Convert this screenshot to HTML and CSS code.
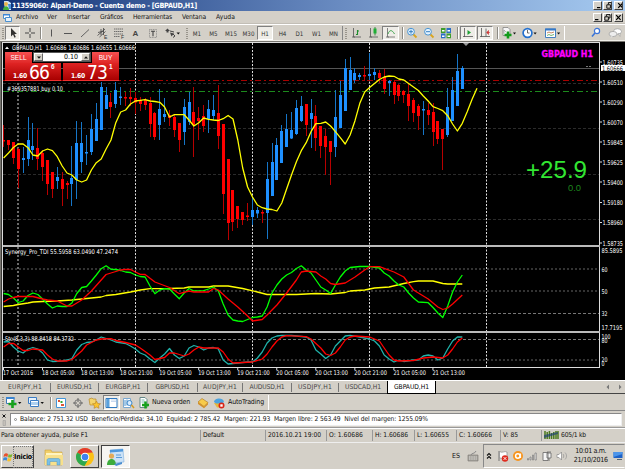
FILE: index.html
```html
<!DOCTYPE html>
<html lang="es">
<head>
<meta charset="utf-8">
<title>11359060: Alpari-Demo - Cuenta demo - [GBPAUD,H1]</title>
<link rel="stylesheet" href="styles.css">
</head>
<body>
<svg class="defs" width="0" height="0">
  <symbol id="win-min" viewBox="0 0 9 9"><path d="M2 6.6h3.4" stroke="#000" stroke-width="1.2"/></symbol>
  <symbol id="win-restore" viewBox="0 0 9 9"><path d="M3.4 3.4V1.6h3.6v3.4H5.6M1.8 3.8h3.6v3.4H1.8z" fill="none" stroke="#000" stroke-width=".9"/></symbol>
  <symbol id="win-close" viewBox="0 0 9 9"><path d="M2.2 2.2l4.4 4.6M6.6 2.2L2.2 6.8" stroke="#000" stroke-width="1.2"/></symbol>
  <symbol id="chev" viewBox="0 0 4 3"><path d="M0 .5h4L2 2.7z" fill="#111"/></symbol>
  <symbol id="cross" viewBox="0 0 12 12"><path d="M6 1v4M6 7v4M1 6h4M7 6h4" stroke="#444" stroke-width="1"/></symbol>
</svg>
<div class="app">
  <header class="titlebar">
    <svg width="12" height="11"><path d="M3 1h4l3 2v7H4z" fill="#cfe2f5"/><circle cx="5" cy="4" r="2" fill="#e9b44a"/><path d="M2 10c0-5 6-5 6 0z" fill="#3fae3b"/><path d="M7 4h3v5H8z" fill="#4b8fd8"/></svg>
    <h1 data-w="185">11359060: Alpari-Demo - Cuenta demo - [GBPAUD,H1]</h1>
    <div class="winbtns"><i><svg><use href="#win-min"/></svg></i><i><svg><use href="#win-restore"/></svg></i><i class="gap"><svg><use href="#win-close"/></svg></i></div>
  </header>
  <nav class="menubar">
    <svg width="12" height="11"><path d="M3.5 2.500h6v4h-6z" fill="#fff" stroke="#4a90d0"/><path d="M3 2h7v1.500H3z" fill="#3b86d6"/><path d="M5.500 5.500h6v4h-6z" fill="#e4f1fc" stroke="#4a90d0"/></svg>
    <span data-w="22">Archivo</span><span data-w="10">Ver</span><span data-w="23">Insertar</span><span data-w="23">Gráficos</span><span data-w="39">Herramientas</span><span data-w="24">Ventana</span><span data-w="19">Ayuda</span>
    <div class="winbtns"><i><svg><use href="#win-min"/></svg></i><i><svg><use href="#win-restore"/></svg></i><i class="gap"><svg><use href="#win-close"/></svg></i></div>
  </nav>
  <div class="toolbar">
    <b class="grip"></b>
    <b class="on"><svg width="12" height="12"><path d="M4 1v8.500l2-2 1.500 3.200 1.300-.6L7.400 7h2.500z" fill="#333"/></svg></b>
    <b><svg width="12" height="12"><use href="#cross"/></svg></b>
    <b class="sep"></b>
    <b><svg width="12" height="12"><path d="M6.500 2.500v7" stroke="#555"/></svg></b>
    <b><svg width="12" height="12"><path d="M2 6.500h8" stroke="#555"/></svg></b>
    <b><svg width="12" height="12"><path d="M2 10l8-7.500" stroke="#555" stroke-width=".9"/></svg></b>
    <b><svg width="12" height="12"><path d="M1.500 8.500L9 2M2 5.500l6-1.500M3.500 10l6-5.500M5 2v6M7.500 1v7" stroke="#444" stroke-width=".8"/><text x="8" y="11.500" class="ic">E</text></svg></b>
    <b><svg width="12" height="12"><path d="M1 2h9M1 4.500h9M1 7h9M1 9.500h6" stroke="#555" stroke-width=".8" stroke-dasharray="1.500 .5"/><text x="8" y="11.500" class="ic">F</text></svg></b>
    <b class="ltr">A</b>
    <b><svg width="12" height="12"><path d="M2.500 2.500h7v8h-7z" fill="none" stroke="#777" stroke-width=".7" stroke-dasharray="1 .7"/><path d="M4 4.300h4M6 4.300v5" stroke="#444" stroke-width="1.100"/></svg></b>
    <b><svg width="18" height="12"><path d="M3.500 1.500l2.500 2.500H4.500v1.500h-2V4H1zM6 5.500l4 1-2.500 3z" fill="#444"/><path d="M6 4l4 1M9 7l2 2-2 1.500" fill="none" stroke="#444"/><path d="M12.500 5.500h3.500l-1.700 2z" fill="#111"/></svg></b>
    <b class="grip"></b>
    <b class="tf">M1</b><b class="tf">M5</b><b class="tf">M15</b><b class="tf">M30</b><b class="tf on">H1</b><b class="tf">H4</b><b class="tf">D1</b><b class="tf">W1</b><b class="tf">MN</b>
    <b class="edge grip"></b>
    <b><svg width="12" height="12"><path d="M2.500 1v9H10M1 10h3" fill="none" stroke="#555" stroke-width=".8"/><path d="M5 7.500h1.500V3M6.500 4H8" fill="none" stroke="#1d8c2c" stroke-width="1.100"/></svg></b>
    <b><svg width="12" height="12"><path d="M2.500 1v9H10M1 10h3" fill="none" stroke="#555" stroke-width=".8"/><path d="M7 0v8.500" stroke="#1d7a2c" stroke-width=".8"/><path d="M5.500 1.500h3v5h-3z" fill="#1fae35"/></svg></b>
    <b class="on"><svg width="12" height="12"><path d="M2.500 1v9H10M1 10h3" fill="none" stroke="#666" stroke-width=".8"/><path d="M3 7c1.500-4.500 4-4.500 6.500 0" fill="none" stroke="#2c9c40" stroke-width=".9"/></svg></b>
    <b class="sep"></b>
    <b><svg width="12" height="12"><path d="M7 7l3.500 3.500" stroke="#d9a520" stroke-width="1.800"/><circle cx="5" cy="4.700" r="3.400" fill="#e3f3ff" stroke="#4a94d2"/><path d="M3 4.700h4M5 2.700v4" stroke="#2574bd" stroke-width=".9"/></svg></b>
    <b><svg width="12" height="12"><path d="M7 7l3.500 3.500" stroke="#d9a520" stroke-width="1.800"/><circle cx="5" cy="4.700" r="3.400" fill="#e3f3ff" stroke="#4a94d2"/><path d="M3 4.700h4" stroke="#2574bd" stroke-width=".9"/></svg></b>
    <b><svg width="12" height="12"><path d="M1 1h4.500v5H1zM6.500 6.500H11v4.800H6.500z" fill="#3f9d2c"/><path d="M6.500 1H11v5H6.500zM1 6.500h4.500v4.800H1z" fill="#2b6fc6"/><path d="M2 3h2.500v1.500H2zM7.500 3H10v1.500H7.500zM2 8.500h2.500V10H2zM7.500 8.500H10V10H7.500z" fill="#fff"/></svg></b>
    <b class="sep"></b>
    <b class="on"><svg width="12" height="12"><path d="M2.500 1v9M1 9.500h10" fill="none" stroke="#555" stroke-width=".8"/><path d="M5.500 3v5L9 5.500z" fill="#1fa035"/></svg></b>
    <b class="on"><svg width="12" height="12"><path d="M2.500 1v9M1 9.500h10M7 1.500v8" fill="none" stroke="#555" stroke-width=".8"/><path d="M11 5.500H8M9.500 3.500L7.700 5.500l1.800 2z" fill="#c33" stroke="#c33" stroke-width=".6"/></svg></b>
    <b class="sep"></b>
    <b><svg width="18" height="12"><path d="M3 .5h5l2 2v6H3z" fill="#f7f7f7" stroke="#777" stroke-width=".7"/><path d="M4 6.500V3l2 2" fill="none" stroke="#888" stroke-width=".6"/><path d="M8 4.500v7M4.500 8h7" stroke="#129a1b" stroke-width="2.600"/><path d="M13 5.500h3l-1.500 2z" fill="#111"/></svg></b>
    <b><svg width="18" height="12"><circle cx="6.500" cy="6" r="4.400" fill="#fff" stroke="#2571cf" stroke-width="1.700"/><path d="M6.500 3v3h2" fill="none" stroke="#444" stroke-width=".8"/><path d="M12.500 5.500h3.200l-1.600 2z" fill="#111"/></svg></b>
    <b><svg width="18" height="12"><path d="M1.500 2h10v8.500h-10z" fill="#fff" stroke="#4480c0"/><path d="M1 1.500h11v2H1z" fill="#3579c8"/><path d="M3 6l2-1 2 1 3-1" fill="none" stroke="#b66a3c" stroke-width=".8"/><path d="M3 8.500l2-1 2 1 3-1" fill="none" stroke="#4a9c4a" stroke-width=".8"/><path d="M13 5.500h3.200l-1.600 2z" fill="#111"/></svg></b>
    <b class="rule"></b>
    <b><svg width="12" height="12"><circle cx="7" cy="4" r="2.600" fill="#fff" stroke="#3b74d8" stroke-width="1.200"/><path d="M5 6L2 9.500" stroke="#3b74d8" stroke-width="1.600"/></svg></b>
    <b><svg width="15" height="12"><ellipse cx="9.500" cy="4.500" rx="4" ry="2.800" fill="#fff" stroke="#999" stroke-width=".7"/><path d="M10 6.500l2 3v-3z" fill="#eee" stroke="#999" stroke-width=".5"/><ellipse cx="5" cy="7" rx="4" ry="2.600" fill="#eee" stroke="#999" stroke-width=".7"/><path d="M3 9l-.5 2.300L5 9.500z" fill="#ddd"/></svg></b>
  </div>

  <main class="chart">
    <svg id="chart" width="625" height="339" viewBox="0 41 625 339"></svg>
    <section class="trade">
      <div class="top">
        <span class="sell">SELL</span>
        <span class="spin"><i><svg width="4" height="3"><use href="#chev"/></svg></i><em>0.10</em><i><svg class="flip" width="4" height="3"><use href="#chev"/></svg></i></span>
        <span class="sell buy">BUY</span>
      </div>
      <div class="prices">
        <div class="price"><small>1.60</small><strong>66</strong><sup>6</sup></div>
        <div class="price"><small>1.60</small><strong>73</strong><sup>1</sup></div>
      </div>
    </section>
  </main>

  <div class="tabs">
    <span><u data-w="34">EURJPY,H1</u></span><span><u data-w="35">EURUSD,H1</u></span><span><u data-w="35">EURGBP,H1</u></span><span><u data-w="34">GBPUSD,H1</u></span><span><u data-w="34">AUDJPY,H1</u></span><span><u data-w="35">AUDUSD,H1</u></span><span><u data-w="34">USDJPY,H1</u></span><span><u data-w="36">USDCAD,H1</u></span><span class="active"><u data-w="35">GBPAUD,H1</u></span>
    <svg width="20" height="8"><path d="M4 1.500v5L1.500 4zM14 1.500v5L16.500 4z" fill="#777"/></svg>
  </div>
  <div class="toolbar2">
    <b class="grip"></b>
    <b class="lead"><svg width="18" height="13"><path d="M1.500 1.500h7.500v6H1.500z" fill="#fff" stroke="#3c78b8"/><path d="M1 1h8.500v2H1z" fill="#3b84d0"/><path d="M7.500 4v8M3.500 8h8" stroke="#17a01c" stroke-width="2.600"/><path d="M13 6h3.400l-1.700 2z" fill="#111"/></svg></b>
    <b class="lead"><svg width="18" height="13"><path d="M1.500 1.500h8v6h-8z" fill="#e6f1fb" stroke="#3b7cc4"/><path d="M3.500 4.500h8v6h-8z" fill="#fff" stroke="#3b7cc4"/><path d="M4 6h7v3H4z" fill="#aed0ef"/><path d="M13.500 6h3.400l-1.700 2z" fill="#111"/></svg></b>
    <b class="sep"></b>
    <b><svg width="12" height="12"><path d="M1.500 1.500h9v9h-9z" fill="#fff" stroke="#4596d8"/><path d="M3 3h2v2H3zM6 7h3v2H6z" fill="#d53"/><path d="M5.500 4h2v2h-2z" fill="#3a3"/></svg></b>
    <b><svg width="12" height="12"><circle cx="6" cy="6" r="3.300" fill="none" stroke="#777"/><path d="M6 1v4M6 7v4M1 6h4M7 6h4" stroke="#666"/></svg></b>
    <b><svg width="13" height="12"><path d="M1 2l3-1 1 1h3v6H2z" fill="#f4d46c" stroke="#b98b2a" stroke-width=".7"/><path d="M8.500 4l1.200 2.500 2.800.3-2 1.900.5 2.600-2.500-1.200-2.500 1.200.5-2.600-2-1.900 2.800-.3z" fill="#fbc42d" stroke="#b98220" stroke-width=".6"/></svg></b>
    <b class="on"><svg width="13" height="12"><path d="M1 1.500h11v9H1z" fill="#fff" stroke="#2f78c0"/><path d="M1.500 2h3v8h-3z" fill="#5aa1dc"/><path d="M6 3h5M6 4.500h5" stroke="#c8d8ee"/></svg></b>
    <b><svg width="13" height="12"><path d="M1.500 1.500h7v9h-7z" fill="#fff" stroke="#7aa8d0"/><path d="M3 3v6M5 2.500v6" stroke="#4b92cc"/><circle cx="7.500" cy="6" r="2.500" fill="#d9edff" stroke="#3d87c8"/><path d="M9.500 8l2.500 3" stroke="#d49b25" stroke-width="1.500"/></svg></b>
    <b><svg width="12" height="12"><path d="M2 .5h5l2 2v8H2z" fill="#fff" stroke="#688"/><path d="M3.500 3h3M3.500 5h4" stroke="#5a9" stroke-width=".8"/><path d="M7.500 4.500v7M4 8h7" stroke="#17a01c" stroke-width="2.500"/></svg></b>
    <b class="txt"><u data-w="38">Nueva orden</u></b>
    <b><svg width="12" height="12"><path d="M1 5l4-3.500 6 4-4 4z" fill="#f8cb4b" stroke="#a9741c" stroke-width=".6"/><path d="M1 5v2l6 4.300v-1.800zM7 9.500l4-4v2l-4 3.800z" fill="#d3902a"/></svg></b>
    <b><svg width="12" height="12"><path d="M1 6h10l-2 4.500H4z" fill="#e9b83b"/><path d="M1 5c0-4 9-5 10 0l-2 1.500H3z" fill="#4da3df"/><circle cx="8.500" cy="8.500" r="3" fill="#d92518"/><path d="M7.300 7.300h2.400v2.400H7.300z" fill="#fff"/></svg></b>
    <b class="txt"><u data-w="36">AutoTrading</u></b>
    <b class="rule"></b>
  </div>
  <div class="terminal">
    <svg width="10" height="14"><path d="M2.500 1.500l3 3M5.500 1.500l-3 3" stroke="#111"/><path d="M3 7.500h2.500v5H3z" fill="#c4c0b8" stroke="#999" stroke-width=".5"/></svg>
    <p><i class="dot"></i><span data-w="408">Balance: 2 751.32 USD&nbsp; Beneficio/Pérdida: 34.10&nbsp; Equidad: 2 785.42&nbsp; Margen: 221.93&nbsp; Margen libre: 2 563.49&nbsp; Nivel del margen: 1255.09%</span></p>
  </div>
  <footer class="status">
    <span><u data-w="87">Para obtener ayuda, pulse F1</u></span><span><u data-w="21">Default</u></span><span><u data-w="53">2016.10.21 19:00</u></span><span><u data-w="34">O: 1.60686</u></span><span><u data-w="33">H: 1.60686</u></span><span><u data-w="32">L: 1.60655</u></span><span><u data-w="33">C: 1.60666</u></span><span><u data-w="15">V: 85</u></span>
    <span><svg width="15" height="9"><path d="M1 0v8M3.200 1v7M5.400 0v8M7.600 2v6M9.800 1v7M12 0v8M14 0v8" stroke="#4b7a1c" stroke-width="1.500"/><path d="M0 4l14-3v2L0 7z" fill="#1b3f77" opacity=".65"/></svg><u data-w="25">605/1 kb</u></span>
  </footer>
  <div class="taskbar">
    <button class="start"><svg width="10" height="11"><path d="M1 3.500C2.500 2 3.500 2 5 3l-.6 3C3 5 2 5.200.5 6z" fill="#e8502a"/><path d="M5.500 3.200c1.500.8 2.500.6 4-.4L8.700 6c-1.200.7-2.500.8-3.700.2z" fill="#7db72f"/><path d="M.4 6.700c1.400-.8 2.600-.7 3.900 0l-.6 3c-1.300-.8-2.500-.8-3.700 0z" fill="#3a87d8"/><path d="M4.800 7c1.300.6 2.500.5 3.800-.2l-.8 3c-1.200.7-2.400.8-3.600.2z" fill="#f8c12c"/></svg><u data-w="18">Inicio</u></button>
    <span class="task flat"><svg width="22" height="20"><path d="M2 3h6l1 2h10v13H2z" fill="#f1cf6a" stroke="#c9a13c" stroke-width=".6"/><path d="M3 6h16v3H3z" fill="#fff4c0"/><path d="M2 8h18v10H2z" fill="#f8e08b"/><path d="M4 18v-5c0-1 1-1.500 2-1.500h9c1 0 2 .5 2 1.500v5h-3v-3.500H7V18z" fill="#7cc0e6" stroke="#4c95c4" stroke-width=".5"/></svg></span>
    <span class="task raised"><svg width="20" height="20"><circle cx="10" cy="10" r="9" fill="#fbc116"/><path d="M10 10L2.200 5.500A9 9 0 0 1 17.800 5.500L10 6z" fill="#e33b2e"/><path d="M2.200 5.500A9 9 0 0 0 9.500 19l4-7L10 10z" fill="#2da94f"/><circle cx="10" cy="10" r="4.300" fill="#fff"/><circle cx="10" cy="10" r="3.300" fill="#3f83f0"/></svg></span>
    <span class="task pressed"><svg width="20" height="18"><path d="M4 2l13-1 1 13-12 1z" fill="#cbe2f7" stroke="#7fb0dd" stroke-width=".6"/><path d="M4 2l13-1v2.500L4 4.500z" fill="#4d97dc"/><path d="M10 7h5M10 9.500h6" stroke="#5a9ad8"/><circle cx="5.500" cy="8" r="2.600" fill="#e2aa58"/><path d="M1 17c0-8 9-8 9 0z" fill="#3dac3b"/><path d="M8 16l8-2v2l-6 2z" fill="#4b8ecf"/></svg></span>
    <div class="lang"><u data-w="8">ES</u><b class="sep"></b><svg width="12" height="12"><path d="M1 5h10v6H1z" fill="#a8a59e" stroke="#77746e" stroke-width=".6"/><path d="M2 7h8M2 9h8" stroke="#eee" stroke-width=".7" stroke-dasharray="1 .7"/><path d="M4 5c0-2 4-1 5-4" fill="none" stroke="#888"/></svg></div>
    <div class="tray">
      <svg width="6" height="12"><path d="M1 5.500L3 3.500l2 2M1 8.500l2-2 2 2" fill="none" stroke="#111" stroke-width="1.100"/></svg>
      <svg width="12" height="12"><path d="M2 1v10" stroke="#777"/><path d="M2.500 1.500c3 2 5-1 7.500.5V8c-3-1-4 1-7.500 0z" fill="#fff" stroke="#888" stroke-width=".7"/><circle cx="8" cy="8.500" r="3.200" fill="#df2b1f"/><path d="M6.600 7.100l2.800 2.800M9.400 7.100L6.600 9.900" stroke="#fff" stroke-width=".9"/></svg>
      <svg width="12" height="12"><circle cx="6" cy="6" r="5" fill="#f7941d"/><circle cx="5.800" cy="6" r="2.200" fill="none" stroke="#fff" stroke-width="1.500"/><path d="M8.500 3.500V8" stroke="#fff" stroke-width="1.200"/></svg>
      <svg width="12" height="12"><path d="M1.500 10V8.500h1V10zM4 10V7h1v3zM6.500 10V5h1v5zM9 10V3h1.300v7z" fill="#fff" stroke="#777" stroke-width=".7"/></svg>
      <svg width="12" height="12"><path d="M2 2.500h5v8H2zM7 3h3v5H6V3z" fill="#f4f4f4" stroke="#666" stroke-width=".8"/><path d="M7 1v2M9 1v2M8 8v3" stroke="#666" stroke-width=".8"/></svg>
      <svg width="12" height="12"><path d="M1 4.500h2L5.500 2v8L3 7.500H1z" fill="#fff" stroke="#888" stroke-width=".7"/><path d="M7 4c1 1 1 3 0 4M9 2.500c2 2 2 5 0 7" fill="none" stroke="#999" stroke-width=".8"/></svg>
      <div class="clock"><u data-w="31">10:01 a.m.</u><u data-w="34">21/10/2016</u></div>
      <svg width="10" height="10"><path d="M.5 1h9v6h-9z" fill="#1d62c8"/><path d="M.5 1h9v2l-9 3z" fill="#4c95ea"/><path d="M4 8h5v1H4z" fill="#567"/></svg>
    </div>
  </div>
</div>
<script src="chart.js"></script>
</body>
</html>
```
FILE: styles.css
```css
* { box-sizing: border-box; }
html, body { margin: 0; overflow: hidden; }
body { width: 625px; height: 469px; background: #d4d0c8; font: 6.7px/9px "DejaVu Sans Condensed", "Liberation Sans", sans-serif; color: #111; }
.defs { position: absolute; }
u, em, i { text-decoration: none; font-style: normal; }
b { font-weight: normal; }
svg { display: block; flex: none; }
[data-w] { white-space: nowrap; }
.app { display: flex; flex-direction: column; height: 469px; }

.titlebar { height: 11px; display: flex; align-items: center; background: linear-gradient(90deg, #123276, #6a8cc2 55%, #a6caf0); }
.titlebar svg:first-child { margin-left: 1px; }
.titlebar h1 { margin: 0 0 0 -1px; font: bold 7.2px/11px "DejaVu Sans Condensed", sans-serif; color: #fff; }
.winbtns { display: flex; margin-left: auto; padding-right: 2px; }
.winbtns i { width: 9px; height: 9px; margin-left: 1px; background: #d4d0c8; border: 1px solid; border-color: #fff #404040 #404040 #fff; overflow: hidden; }
.winbtns i.gap { margin-left: 2px; }
.winbtns i svg { width: 9px; height: 9px; margin: -1px; }
.menubar { height: 13px; display: flex; align-items: center; border-bottom: 1px solid #c2beb6; }
.menubar > svg { margin: 0 4px 0 0; }
.menubar > span { margin-right: 10px; }
.menubar > span:nth-of-type(2) { margin-left: -1px; }

.toolbar { height: 17px; display: grid; padding-top: 1px; border-top: 1px solid #fff; border-bottom: 1px solid #f0eee8;
  grid-template-columns: 5px 16px 17px 4px repeat(7, 17px) 23px 5px 16px 17px 18px repeat(6, 17px) 7px 16px 17px 18px 4px 16px 17px 18px 5px 17px 17px 6px 18px 23px 23px 23px 18px 20px; }
.toolbar > b, .toolbar2 > b { display: flex; align-items: center; justify-content: center; min-width: 0; }
.on { background: #efede8; border: 1px solid; border-color: #808080 #fff #fff #808080; }
.toolbar > .on { margin: 0 1px 0 0; height: 14px; }
.grip::before { content: ""; width: 2px; height: 11px; background: repeating-linear-gradient(#99958c 0 1px, #d4d0c8 1px 2px); }
.edge { border-left: 1px solid #888; }
.sep::before { content: ""; width: 1px; height: 12px; background: #8c8a84; box-shadow: 1px 0 #fff; }
.rule { border-left: 1px solid #fff; }
.ic { font: 5px "Liberation Sans", sans-serif; fill: #333; }
.ltr { font: bold 8px "Liberation Sans", sans-serif; color: #444; }
.tf { font: 6.2px "DejaVu Sans Condensed", sans-serif; color: #333; }

.chart { height: 339px; display: grid; background: #000; }
.chart > * { grid-area: 1 / 1; }
.trade { width: 114px; margin: 11px 0 0 5px; height: 29px; color: #fff; }
.top { display: flex; height: 11px; }
.sell { width: 27px; font: 6.6px/12px "Liberation Sans", sans-serif; text-align: center; background: linear-gradient(#f65050, #e02828); }
.spin { flex: 1; display: flex; margin: 0 1px; height: 10px; background: #fff; border: 1px solid #555; }
.spin i { width: 9px; background: #d4d0c8; display: flex; align-items: center; justify-content: center; border: 1px solid; border-color: #fff #666 #666 #fff; }
.spin em { flex: 1; color: #000; text-align: right; padding-right: 3px; font-size: 7px; }
.flip { transform: scaleY(-1); }
.prices { display: flex; gap: 2px; height: 18px; }
.price { flex: 1; display: flex; align-items: flex-end; padding-left: 8px; background: linear-gradient(#e02424, #a80000); border-bottom: 1px solid #f03030; line-height: 1; }
.price small { font: bold 6.7px/7px "DejaVu Sans Condensed", sans-serif; width: 16px; letter-spacing: -.2px; }
.price strong { font: normal 19px/17px "DejaVu Sans Condensed", sans-serif; letter-spacing: -.8px; width: 22px; margin-bottom: -1px; }
.price sup { font: bold 6.500px/7px "Liberation Sans", sans-serif; align-self: flex-start; }

#chart text { font: 6.4px "DejaVu Sans Condensed", sans-serif; fill: #fff; }
#chart .dark { fill: #000; }
#chart .pair { font: bold 8.300px "DejaVu Sans", sans-serif; fill: #f0f; stroke: #f0f; stroke-width: .3; }
#chart .pips { font: 24.500px "Liberation Sans", sans-serif; fill: #32e632; }
#chart .pips0 { font: 9.500px "Liberation Sans", sans-serif; fill: #1d851d; }
.line { fill: none; stroke-width: 1.3; stroke-linejoin: round; }

.tabs { height: 14px; display: grid; grid-template-columns: 51px 48px 49px 50px 45px 49px 47px 48px 49px 1fr; align-items: center; border-top: 1px solid #fff; border-bottom: 1px solid #444; color: #444; }
.tabs span { display: flex; justify-content: center; border-right: 1px solid #777; line-height: 9px; }
.tabs span:nth-child(8) { border: 0; }
.tabs .active { align-self: stretch; align-items: center; background: #fff; border: 1px solid #000; border-top: 0; margin-bottom: -1px; height: 13px; color: #000; }
.tabs svg { justify-self: end; }
.toolbar2 { height: 17px; display: grid; border-bottom: 1px solid #888; padding-top: 1px;
  grid-template-columns: 5px 22px 22px 3px 17px 17px 17px 17px 17px 14px 44px 15px 17px 41px 1fr; }
.toolbar2 > .on { height: 15px; }
.toolbar2 > .lead { justify-content: flex-start; }
.toolbar2 > .txt { font-size: 7px; justify-content: flex-start; padding-left: 1px; }
.terminal { height: 17px; display: flex; padding: 2px 3px 1px 0; border-bottom: 1px solid #999; }
.terminal p { margin: 0; flex: 1; display: flex; align-items: center; background: #fff; border: 1px solid #888; border-right-color: #eee; border-bottom-color: #eee; padding-left: 3px; }
.dot { width: 3px; height: 3px; border: 1px solid #888; border-radius: 2px; margin-right: 3px; }
.status { height: 15px; display: grid; align-items: center; border-top: 1px solid #fff; border-bottom: 1px solid #eee;
  grid-template-columns: 200px 65px 61px 46px 42px 42px 44px 41px 1fr; }
.status span { display: flex; align-items: center; height: 11px; padding-left: 2px; border-left: 1px solid #999; gap: 2px; }
.status span:first-child { border: 0; padding-left: 1px; }

.taskbar { flex: 1; display: flex; padding: 1px 0; }
.start { width: 33px; height: 23px; margin: 1px 0 0 1px; padding: 0 0 0 1px; display: flex; align-items: center; gap: 1px; background: #d4d0c8; border: 1px solid; border-color: #fff #404040 #404040 #fff; font: bold 7px "DejaVu Sans Condensed", sans-serif; }
.start u { outline: 1px dotted #777; outline-offset: 0; padding: 6px 0; }
.task { height: 23px; margin-top: 1px; display: flex; align-items: center; justify-content: center; }
.flat { width: 36px; padding-left: 4px; }
.raised { width: 29px; border: 1px solid; border-color: #fff #404040 #404040 #fff; }
.pressed { width: 29px; margin-left: 2px; background: #f6f5f2; border: 1px solid; border-color: #404040 #fff #fff #404040; }
.lang { margin-left: auto; width: 31px; display: flex; align-items: center; font-size: 7px; }
.lang .sep { margin: 0 4px 0 3px; }
.tray { width: 142px; height: 24px; display: flex; align-items: center; border: 1px solid; border-color: #888 transparent #fff #888; padding-left: 2px; }
.tray svg + svg { margin-left: 2.700px; }
.tray svg:nth-child(2) { margin-left: 5px; }
.clock { display: flex; flex-direction: column; align-items: center; margin: 0 5px 0 6px; width: 34px; font-size: 7px; }
```
FILE: chart.js
```js
const STEP = 4.88, X0 = 3.6, X = i => X0 + STEP * i;
const svg = document.getElementById('chart');
let out = '';

// high, body top, body bottom, low, up(1) / down(0)
const bars = [
[125,140,141.5,147,0],[140,140,145,150,0],[142,142,158,164,0],[148,149,169,188,0],[147,158,160,173,1],[117,140,159,166,1],[123,146,150,160,1],[128,148,159,170,0],[150,153,167,181,0],[160,160,184,195,0],
[172,172,189,198,0],[167,177,181,189,1],[172,179,189,206,0],[181,183,185,199,0],[146,178,184,206,1],[121,143,180,199,1],[122,143,162,173,1],[135,152,153,165,1],[114,129,152,155,1],[103,119,141,141,1],
[82,87,130,130,1],[87,95,109,109,1],[93,102,107,118,0],[82,90,104,108,1],[87,96.5,98,105,1],[92,97,98,106,0],[88,97,99,106,0],[92,98,102.5,114,0],[97,100,104,111,0],[98,100,105,110,0],
[97,103,124,137,0],[112,113,137,140,0],[89,109,125,140,1],[98,114,117,122,1],[110,115,118,126,0],[115,117,130,137,0],[123,123,140,152,0],[99,107,132,145,1],[92,102,122,125,1],[87,112,125,157,0],
[107,118,121,140,0],[105,116,126,132,0],[100,109,119,133,1],[95,110,116,120,1],[85,113,136,149,0],[124,124,194,214,0],[159,159,223,240,0],[190,190,222,231,0],[206,206,219,228,0],[212,212,220,225,0],
[203,215.5,217,221,0],[198,210,217,225,1],[207,210,213.5,218,1],[210,212,213,223,0],[162,179,213,239,1],[143,162,196,196,1],[138,145,180,180,1],[125,131,163,163,1],[114,129,147,147,1],[112,130,138.5,139,1],
[100,108,134,135,1],[96,106,121,122,1],[104,104,125,136,0],[99,113,119,148,1],[105,116,138,151,0],[126,126,146,158,0],[129,136,147,175,0],[141,141,152,185,0],[90,117,147,157,1],[81,95,128,128,1],
[59,68,111,111,1],[57,70,90,90,1],[68,73,80,83,1],[73,75,77,80,1],[66,75,76,81,0],[53,74,76,80,1],[68,72,75,80,1],[70,73,78,83,0],[69,77,89,94,0],[80,81,83,96,1],
[80,82,95,104,0],[84,85,96,101,0],[90,91,95,103,0],[84,94,106,121,0],[98,100,113,122,0],[104,106,116,130,0],[101,109,110.5,135,1],[103,110,115,125,0],[103,112,132,146,0],[121,121,139,144,0],
[129,129,139,170,0],[88,107,135,137,1],[77,90,121,121,1],[54,71,106,106,1],[66,68,89,89,1]];

const hline = (y, color, dash, w = 1) => out += `<path d="M3 ${y}H599" stroke="${color}" stroke-width="${w}" ${dash ? `stroke-dasharray="${dash}"` : ''}/>`;
const label = (x, y, s, w, cls = '') => out += `<text x="${x}" y="${y}" class="${cls}" ${w ? `textLength="${w}" lengthAdjust="spacingAndGlyphs"` : ''}>${s}</text>`;

[83.5, 128.5, 174.5, 219.5].forEach(y => hline(y, '#2b2b2b', '3 2'));
[269, 291, 360].forEach(y => hline(y, '#444', '2 2', 1.6));
[313.5, 339.5].forEach(y => hline(y, '#777', '3 2'));
hline(68.5, '#555');
out += '<path d="M18 43V367" stroke="#777" stroke-width="1.800" stroke-dasharray="2 2"/>';
[135.5, 252.5, 369.5, 486.5].forEach(x => out += `<path d="M${x} 43V367" stroke="#ddd" stroke-dasharray="2 1.500"/>`);
hline(80.5, '#a80000', '6 3 2 3', 1.2);
hline(91.5, '#1c8a1c', '6 3 2 3', 1.2);

bars.forEach(([h, t, b, l, up], i) => {
  const x = Math.round(X(i) - .5);
  out += `<path d="M${x + .5} ${h}V${l}" stroke="${up ? '#1676c8' : '#b80000'}"/><path d="M${x - 1} ${t}h3V${Math.max(b, t + 1.5)}h-3z" fill="${up ? '#1e90ff' : '#f00'}"/>`;
});

// Series are flat lists of bar index, y
const line = (s, color) => {
  let d = '';
  for (let k = 0; k < s.length; k += 2) d += (k ? 'L' : 'M') + X(s[k]).toFixed(1) + ' ' + s[k + 1];
  out += `<path class="line" d="${d}" stroke="${color}"/>`;
};
line([158,153,147.5,144,144,147.7,155,156,151,149,150.7,156.7,166,173,175,180,182,180,170,162.7,159,149,140,122.7,112,110,104,101,100.3,99.7,101,101.5,102.3,107,117,114.7,114.7,114.7,120,126,122.7,118,119.3,120,120.5,118.7,115.5,119,140,168,187,197,205,207.7,209,209.5,211,203,189,175,161.7,150.7,142.7,131.7,123.7,123.3,122,126,131.7,137.7,144,135,120.7,103.3,92,87.5,83.5,79.5,77,76,76.3,79,80,83.5,87,90.5,96,101,106.7,108.5,110.7,115.7,124,131,123.3,111.7,99.3,88.3].flatMap((y, i) => [i, y]), '#ff0');
line([0,306.5,2,305.5,3,304.5,5,303,6,302,8,301.5,11,301,14,300,18,298,20,297,21,295.5,23,294.5,26,292,28,290,30,288.7,34,288.5,37,288,38,287,42,287,43,286,46,286,49,288.5,52,292,54,294.5,60,294.5,64,293.5,67,294,70,292.5,71,291,74,290,76,288,79,287,82,283.5,84,281.7,85,281,88,281,90,283.5,91,284,94,284], '#ff0');
line([0,293.5,1,294.5,2,298,3,302.5,4,301,5,295.5,6,293,7,294.5,8,299,9,304,10,308,11,306,12,306.5,13,306.5,14,303,15,293.5,16,287.5,17,286.5,18,281,19,275,20,268.7,21,265.8,22,269.3,23,269.5,24,270.5,25,272,26,272.5,27,275,28,276.5,29,277,30,286,31,293.7,32,290,33,288.7,34,289,35,294,36,298.7,37,293,38,288.5,39,291,41,290.7,42,289,43,287,44,291,45,304,46,315,47,320,48,321,49,321.5,50,319.5,51,317.5,52,317,53,316,54,307,55,293,56,285,57,279,58,275,59,272.5,60,268.5,61,265.8,62,270,63,273,64,280,65,287,66,290,67,293.5,68,285,69,277,70,271,71,267.5,72,267,73,266.5,75,266.5,77,268,78,273,79,276,80,281,81,285,82,287,83,293,84,298,85,302,87,302.7,88,307.5,89,313,90,317.5,91,306,92,292,93,282,94,275], '#0f0');
line([0,302,1,299,2,297.5,3,296.5,6,296.5,8,299,9,300,11,301,13,306,14,306,16,300,18,291,20,280,21,274.5,24,270,25,269.3,26,269.5,27,272,28,274.3,29,274.5,31,282,34,287.5,36,293.7,38,291,39,292,42,292,43,288.5,44,290,46,299,48,307,50,316,51,321,53,319.5,54,315,56,305,58,293,60,280,61,272,62,271,64,272,65,276,66,279,67,283.5,68,284.5,70,283,72,277,74,270,75,266.7,77,266.7,80,272,82,277,84,290,85,293,87,299,89,307,90,309.5,91,308,92,304,94,295], '#f00');
line([0,342,1,341.5,2,347,3,351,4,353,5,349,6,347.5,7,349,8,353,9,360,10,361.5,12,361,13,360,14,358.5,15,350,16,344.5,17,342.5,18,342,19,340,20,337,21,338.5,22,340,23,342,25,343.5,26,346,27,349,28,353,29,355,30,359,31,362.5,32,358,33,354,34,348.5,35,355,36,358.5,37,356,38,348,39,345.5,40,347,41,350,42,348,43,347.5,44,349,45,360,46,364,50,362,51,362,52,358,53,352,54,343,55,338,56,336,57,335.3,59,335.5,62,337,63,340,64,350,65,354,66,358.5,67,355,68,346,69,341,70,336,71,335.3,73,337,75,339,76,341,77,346,78,355,79,359,80,362,81,360,82,361.5,84,360,85,360,86,356,87,355,88,356,89,360,90,358,91,349,92,341,93,337,94,337], '#20b2aa');
line([0,347,1,343.5,2,343.3,3,347,4,350.5,5,350.5,6,349,8,350,9,355,10,359,11,361,13,361,14,359.5,16,351,17,345,19,340,20,339,22,338.7,23,340.5,25,342.5,27,345,28,348,30,355,31,359.5,33,357.5,34,353,35,353,37,356,38,354,39,350,40,347,41,348,44,348,45,352,46,359,47,363,51,362,53,359,54,354,55,347,56,341,57,337,58,335.7,62,336.7,63,339,65,348,66,354,67,355.5,68,353,69,347,70,340,71,337,72,336,75,337,76,339,77,341,78,348,79,355,80,360,81,361,84,360.5,86,358,88,357,90,358,91,355,92,349,93,342,94,338], '#f00');

out += '<path d="M0 41h625v1H0zM0 41h1.500v339H0z" fill="#77756f"/><path d="M2 42.500H600M2.500 42V381M599.500 42V367M2 367.500H600" stroke="#ddd" fill="none"/>';
out += '<path d="M3 246H600M3 332H600" stroke="#bbb" stroke-width="2"/>';
out += '<path d="M463 43h6l-3 3z" fill="#999"/><path d="M586 66.500h2M589 66.500h2" stroke="#777"/>';
out += '<path d="M5 49h4L7 46.500z" fill="#fff"/>';
out += '<path d="M601 65h24v6h-24z" fill="#fff"/>';
[['1.60735',62.5],['1.60510',82.5],['1.60290',102.5],['1.60070',122.5],['1.59845',142.5],['1.59625',162.5],['1.59400',182.5],['1.59180',203],['1.58960',223],['1.58735',243.5]].forEach(([s, y]) => {
  label(602.5, y + 2, s, 20.5); out += `<path d="M599 ${y - .5}h3" stroke="#ddd"/>`;
});
label(602, 70.5, '1.60666', 21, 'dark');
[['85.5895',251,21],['60',269.5,6],['50',291.5,6],['32',314,6],['17.7195',327.5,21],['100',337,9],['80',340.5,6],['20',360,6],['0',364,3]].forEach(([s, y, w]) => label(601.5, y + 2, s, w));
['17 Oct 2016','18 Oct 05:00','18 Oct 13:00','18 Oct 21:00','19 Oct 05:00','19 Oct 13:00','19 Oct 21:00','20 Oct 05:00','20 Oct 13:00','20 Oct 21:00','21 Oct 05:00','21 Oct 13:00'].forEach((s, i) => {
  const x = i ? 3 + 39.04 * i : 3;
  label(x, 375.3, s, i ? 32.5 : 30); out += `<path d="M${x + .5} 367v3" stroke="#ddd"/>`;
});
label(12, 50, 'GBPAUD,H1&#160; 1.60686 1.60686 1.60655 1.60666', 123);
label(7, 90.5, '#369357881 buy 0.10', 56);
label(5, 254, 'Synergy_Pro_TDI 55.5958 63.0490 47.2474', 113);
label(5, 340.5, 'Sto(8,3,3) 88.8418 84.3732', 69);
label(541.5, 57, 'GBPAUD H1', 51.5, 'pair');
label(526, 178, '+25.9', 61, 'pips');
label(568, 191, '0.0', 13, 'pips0');
svg.innerHTML = out;

// Tighten each caption to its column
document.querySelectorAll('[data-w]').forEach(el => {
  const r = document.createRange(); r.selectNodeContents(el);
  el.style.letterSpacing = (el.dataset.w - r.getBoundingClientRect().width) / el.textContent.length + 'px';
});
```
